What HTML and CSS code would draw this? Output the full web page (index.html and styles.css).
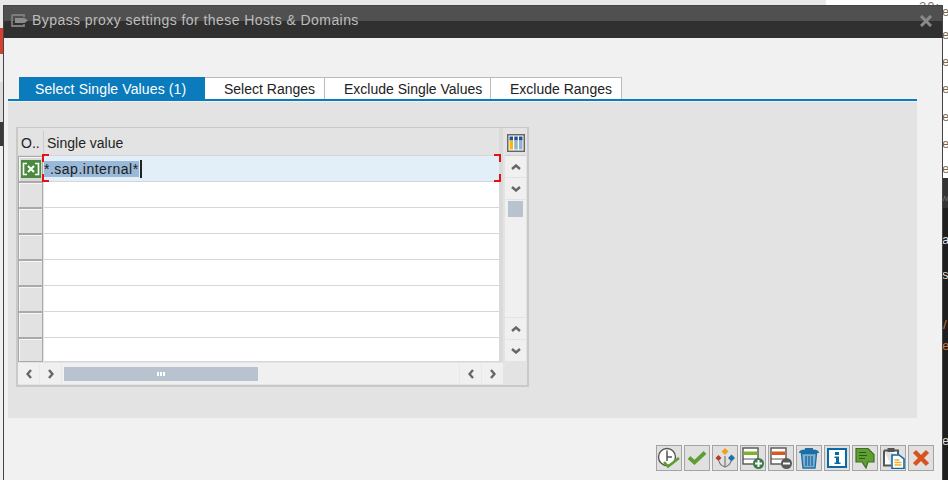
FILE: index.html
```html
<!DOCTYPE html>
<html lang="en">
<head>
<meta charset="utf-8">
<title>Bypass proxy settings</title>
<link rel="stylesheet" href="styles.css">
</head>
<body>
<div class="desktop">
  <div class="back-top"></div>
  <div class="back-dark"></div>
  <div class="back-band"></div>
  <div class="back-left"></div>
  <div class="frag f1">20:</div><div class="frag f2">e</div><div class="frag f3">e</div><div class="frag f4">e</div><div class="frag f5">e</div><div class="frag f6">e</div><div class="frag f7">e</div><div class="frag f7b">e</div>
  <div class="frag lt f8">W</div><div class="frag lt f9">a</div><div class="frag lt f10">s</div><div class="frag or f11">/</div><div class="frag or f12">e</div><div class="frag lt f13">e</div>

  <section class="dialog">
    <header class="titlebar">
      <svg class="title-icon" width="17" height="13" viewBox="0 0 17 13"><path d="M1 1h12v2M1 1v11h12v-2" fill="none" stroke="#7d7d7d" stroke-width="1.800"/><path d="M4 4h9.500L17 6.500 13.500 9H4z" fill="#8c8c8c"/></svg>
      <span class="title-text">Bypass proxy settings for these Hosts &amp; Domains</span>
      <svg class="close" width="12" height="12" viewBox="0 0 12 12"><path d="M1 1l10 10M11 1L1 11" stroke="#8a8a8a" stroke-width="3"/></svg>
    </header>
    <div class="content">
      <nav class="tabs">
        <span class="tab active">Select Single Values (1)</span>
        <span class="tab t2">Select Ranges</span>
        <span class="tab t3">Exclude Single Values</span>
        <span class="tab t4">Exclude Ranges</span>
      </nav>
      <div class="panel">
        <div class="table">
          <div class="grid">
            <div class="main">
              <div class="head">
                <span class="hc1">O..</span>
                <span class="hc2">Single value</span>
              </div>
              <div class="row selected">
                <span class="rowhead on">
                  <svg width="20" height="18" viewBox="0 0 20 18"><rect width="20" height="18" fill="#4a8a3e"/><path d="M6 3.500H2.500v11H6M14 3.500h3.500v11H14" fill="none" stroke="#fff" stroke-width="1.600"/><path d="M7 6l6 6M13 6l-6 6" stroke="#fff" stroke-width="2"/></svg>
                </span>
                <span class="cell"><span class="sel">*.sap.internal*</span><span class="caret"></span>
                  <i class="br tl"></i><i class="br bl"></i><i class="br tr"></i><i class="br brr"></i>
                </span>
              </div>
              <div class="row"><span class="rowhead"></span><span class="cell"></span></div>
              <div class="row"><span class="rowhead"></span><span class="cell"></span></div>
              <div class="row"><span class="rowhead"></span><span class="cell"></span></div>
              <div class="row"><span class="rowhead"></span><span class="cell"></span></div>
              <div class="row"><span class="rowhead"></span><span class="cell"></span></div>
              <div class="row"><span class="rowhead"></span><span class="cell"></span></div>
              <div class="row last"><span class="rowhead"></span><span class="cell"></span></div>
            </div>
            <div class="vbar">
              <div class="cfg">
                <svg width="18" height="18" viewBox="0 0 18 18"><rect x=".75" y=".75" width="16.500" height="16.500" fill="#fff" stroke="#666" stroke-width="1.500"/><rect x="2.500" y="2.500" width="3.500" height="4" fill="#27508f"/><rect x="2.500" y="6.500" width="3.500" height="9" fill="#f5b914"/><rect x="7.250" y="2.500" width="3.500" height="4" fill="#27508f"/><rect x="7.250" y="6.500" width="3.500" height="9" fill="#8fb4d2"/><rect x="12" y="2.500" width="3.500" height="4" fill="#27508f"/><rect x="12" y="6.500" width="3.500" height="9" fill="#8fb4d2"/></svg>
              </div>
              <button class="sb"><svg width="10" height="6" viewBox="0 0 10 6"><path d="M1 5l4-3.500L9 5" fill="none" stroke="#666" stroke-width="2.400"/></svg></button>
              <button class="sb"><svg width="10" height="6" viewBox="0 0 10 6"><path d="M1 1l4 3.500L9 1" fill="none" stroke="#666" stroke-width="2.400"/></svg></button>
              <div class="vtrack"><div class="vthumb"></div></div>
              <button class="sb"><svg width="10" height="6" viewBox="0 0 10 6"><path d="M1 5l4-3.500L9 5" fill="none" stroke="#666" stroke-width="2.400"/></svg></button>
              <button class="sb"><svg width="10" height="6" viewBox="0 0 10 6"><path d="M1 1l4 3.500L9 1" fill="none" stroke="#666" stroke-width="2.400"/></svg></button>
            </div>
          </div>
          <div class="hbar">
            <button class="hb"><svg width="6" height="10" viewBox="0 0 6 10"><path d="M5 1L1.500 5 5 9" fill="none" stroke="#666" stroke-width="2.400"/></svg></button>
            <button class="hb"><svg width="6" height="10" viewBox="0 0 6 10"><path d="M1 1l3.500 4L1 9" fill="none" stroke="#666" stroke-width="2.400"/></svg></button>
            <div class="htrack"><div class="hthumb"><i></i><i></i><i></i></div></div>
            <button class="hb"><svg width="6" height="10" viewBox="0 0 6 10"><path d="M5 1L1.500 5 5 9" fill="none" stroke="#666" stroke-width="2.400"/></svg></button>
            <button class="hb"><svg width="6" height="10" viewBox="0 0 6 10"><path d="M1 1l3.500 4L1 9" fill="none" stroke="#666" stroke-width="2.400"/></svg></button>
          </div>
        </div>
      </div>
      <footer class="actions">
        <button class="act"><svg width="24" height="23" viewBox="0 0 24 23"><circle cx="10" cy="10" r="8.500" fill="#fff" stroke="#555" stroke-width="1.400"/><path d="M10 3.500V10h5M10 10v4" fill="none" stroke="#555" stroke-width="1.500"/><path d="M7 15l4 4.500L22 11" fill="none" stroke="#5e9e2e" stroke-width="2.600"/></svg></button>
        <button class="act"><svg width="22" height="22" viewBox="0 0 22 22"><path d="M3 10.500l5.500 5L19 5.500" fill="none" stroke="#5f9e32" stroke-width="3.800"/></svg></button>
        <button class="act"><svg width="22" height="22" viewBox="0 0 22 22"><path d="M11 9v11M5 14c.5 3 3 5 6 6 3-1 5.500-3 6-6" fill="none" stroke="#777" stroke-width="1.200"/><path d="M11 1l3.500 3.500L11 8 7.500 4.500z" fill="#f0a020"/><path d="M4.500 8l3 3-3 3-3-3z" fill="#b5392b"/><path d="M17.500 7.500l3.500 3.500-3.500 3.500-3.500-3.500z" fill="#1f6fa8"/></svg></button>
        <button class="act"><svg width="24" height="24" viewBox="0 0 24 24"><rect x="2" y="2" width="15" height="16" fill="#fff" stroke="#555" stroke-width="1.400"/><rect x="2.800" y="5.500" width="13.500" height="3.500" fill="#7cb32b"/><path d="M2 13h15" stroke="#555"/><circle cx="17.500" cy="17.500" r="5.500" fill="#3a7a4a"/><path d="M17.500 14v7M14 17.500h7" stroke="#fff" stroke-width="2"/></svg></button>
        <button class="act"><svg width="24" height="24" viewBox="0 0 24 24"><rect x="2" y="2" width="15" height="16" fill="#fff" stroke="#555" stroke-width="1.400"/><rect x="2.800" y="5.500" width="13.500" height="3.500" fill="#d9581c"/><path d="M2 13h15" stroke="#555"/><circle cx="17.500" cy="17.500" r="5.500" fill="#5a5a5a"/><path d="M14 17.500h7" stroke="#fff" stroke-width="2"/></svg></button>
        <button class="act"><svg width="22" height="22" viewBox="0 0 22 22"><path d="M1 6c0-3 4-3.500 6-3.500V1h8v1.500c2 0 6 .5 6 3.500z" fill="#1d6ea5"/><path d="M3.500 6.500h15l-1.500 14.500H5z" fill="#7fb0d2" stroke="#1d6ea5" stroke-width="1.400"/><path d="M8 9v10M11 9v10M14 9v10" stroke="#1d6ea5" stroke-width="1.500"/></svg></button>
        <button class="act"><svg width="20" height="20" viewBox="0 0 20 20"><rect x="1" y="1" width="18" height="18" fill="#fff" stroke="#0a6aa8" stroke-width="2"/><path d="M8 4h4v3H8zM7.500 8.500H12v6h1.500V16h-6v-1.500H9V10H7.500z" fill="#0a6aa8"/></svg></button>
        <button class="act"><svg width="22" height="22" viewBox="0 0 22 22"><path d="M2 1.500h12l6 6V15h-6l-2 6-4-6H2z" fill="#5f9e32" stroke="#3f6e22" stroke-width="1.200"/><path d="M5 5.500h7M5 8.500h8M5 11.500h6" stroke="#2f5a1c" stroke-width="1.100"/></svg></button>
        <button class="act"><svg width="23" height="22" viewBox="0 0 23 22"><path d="M2 3.500h14v4M2 3.500v15h7" fill="#fff" stroke="#555" stroke-width="2"/><rect x="5.500" y="1" width="7" height="4" fill="#555"/><path d="M10 8h7l5 4v9.500H10z" fill="#fff" stroke="#0a6aa8" stroke-width="1.600"/><path d="M12.500 13h5M12.500 15.500h7M12.500 18h7" stroke="#f0b020" stroke-width="1.400"/></svg></button>
        <button class="act"><svg width="20" height="20" viewBox="0 0 20 20"><path d="M3.500 3.500l13 13M16.500 3.500l-13 13" stroke="#d9531e" stroke-width="4.400"/></svg></button>
      </footer>
    </div>
  </section>
</div>
</body>
</html>
```
FILE: styles.css
```css
* { box-sizing: border-box; }
html, body { margin: 0; padding: 0; }
body { width: 948px; height: 480px; overflow: hidden; font-family: "Liberation Sans", Arial, sans-serif; font-size: 14px; color: #222; }
.desktop { position: relative; width: 948px; height: 480px; background: #fff; overflow: hidden; }
.back-top { position: absolute; left: 0; top: 0; width: 826px; height: 6px; background: #e8e8e8; }
.back-dark { position: absolute; left: 942px; top: 178px; width: 6px; height: 302px; background: #1e1e1e; }
.back-band { position: absolute; left: 942px; top: 178px; width: 6px; height: 30px; background: #333; }
.back-left { position: absolute; left: 0; top: 6px; width: 4px; height: 474px; background: linear-gradient(#e8e8e8 0 22px, #d64030 22px 48px, #ececec 48px 76px, #dcdcdc 76px 116px, #3a3a3a 116px 140px, #f0f0f0 140px 300px, #f1f1f1 300px); }
.frag { position: absolute; font-size: 13px; line-height: 14px; color: #7a6650; }
.lt { color: #ddd; }
.or { color: #d0703a; }
.f1 { left: 919px; top: 0; color: #777; letter-spacing: 1px; }
.f2 { left: 942px; top: 5px; }
.f3 { left: 942px; top: 28px; }
.f4 { left: 942px; top: 55px; }
.f5 { left: 942px; top: 82px; }
.f6 { left: 942px; top: 110px; }
.f7 { left: 942px; top: 137px; }
.f7b { left: 942px; top: 162px; }
.f8 { left: 941px; top: 192px; color: #777; font-size: 8px; }
.f9 { left: 942px; top: 233px; }
.f10 { left: 942px; top: 268px; }
.f11 { left: 943px; top: 318px; }
.f12 { left: 942px; top: 339px; }
.f13 { left: 942px; top: 434px; }

.dialog { position: absolute; left: 3px; top: 5px; width: 940px; height: 480px; border: 1px solid #444; border-bottom: 0; background: #f1f1f1; display: flex; flex-direction: column; }
.titlebar { height: 32px; background: linear-gradient(#505050 0 15px, #303030 15px); display: flex; align-items: center; padding: 0 10px 0 7px; flex: none; }
.title-icon { flex: none; margin-right: 4px; margin-top: -3px; }
.title-text { flex: 1; color: #bdbdbd; font-size: 14px; letter-spacing: .43px; line-height: 29px; align-self: flex-start; }
.close { flex: none; margin-top: -2px; }

.content { flex: 1; display: flex; flex-direction: column; padding: 39px 25px 0 4px; }
.tabs { display: flex; padding-left: 11px; height: 24px; border-bottom: 2px solid #0a7bbd; flex: none; }
.tab { height: 22px; line-height: 23px; font-size: 14px; color: #222; background: #fff; border: 1px solid #bbb; border-left: 0; border-bottom: 0; padding-left: 19px; white-space: nowrap; }
.tab.active { width: 186px; background: #0a7bbd; color: #fff; border: 0; padding-left: 16px; line-height: 25px; letter-spacing: .12px; }
.t2 { width: 120px; }
.t3 { width: 166px; }
.t4 { width: 131px; }

.panel { height: 316px; margin-top: 1px; background: #e3e3e3; padding: 25px 0 0 8px; flex: none; }
.table { width: 513px; height: 260px; border: 2px solid #c9c9c9; border-top-width: 1px; display: flex; flex-direction: column; background: #e3e3e3; }
.grid { display: flex; height: 234px; flex: none; }
.main { width: 481px; flex: none; display: flex; flex-direction: column; }
.head { height: 28px; display: flex; align-items: center; flex: none; border-bottom: 1px solid #d6d6d6; padding-top: 2px; }
.hc1 { width: 25px; padding-left: 3px; }
.hc2 { flex: 1; padding-left: 3px; border-left: 1px solid #ccc; line-height: 24px; }
.row { height: 26px; display: flex; flex: none; }
.row.last { height: 24px; }
.rowhead { width: 25px; flex: none; background: #e2e2e2; border: 1px solid #aaa; box-shadow: inset 1px 1px #f6f6f6; display: flex; align-items: center; justify-content: center; }
.rowhead.on { background: #d8d8d8; }
.cell { flex: 1; position: relative; background: #fff; border-bottom: 1px solid #d6d6d6; margin-left: 1px; display: flex; align-items: center; }
.selected .cell { background: #e2eff8; }
.sel { background: #9ab8d8; color: #1c1c1c; height: 16px; line-height: 16px; font-size: 14px; letter-spacing: .5px; margin-top: 1px; }
.caret { width: 2px; height: 18px; background: #222; margin-left: 1px; }
.br { position: absolute; width: 7px; height: 8px; border: 0 solid #e01414; }
.tl { left: -2px; top: -2px; border-top-width: 2px; border-left-width: 2px; }
.bl { left: -2px; bottom: -1px; border-bottom-width: 2px; border-left-width: 2px; }
.tr { right: -2px; top: -2px; border-top-width: 2px; border-right-width: 2px; }
.brr { right: -2px; bottom: -1px; border-bottom-width: 2px; border-right-width: 2px; }

.vbar { width: 27px; flex: none; display: flex; flex-direction: column; border-left: 4px solid #dadada; padding-left: 2px; background: #e3e3e3; }
.cfg { height: 28px; display: flex; align-items: center; justify-content: center; flex: none; padding-top: 3px; border-bottom: 1px solid #d0d0d0; }
.sb { height: 21px; width: 21px; border: 0; padding: 0; margin: 0 0 1px; background: #f0f0f0; display: flex; align-items: center; justify-content: center; flex: none; }
.vtrack { flex: 1; background: #f0f0f0; width: 21px; padding: 1px 3px 0; margin-bottom: 1px; }
.vthumb { height: 16px; width: 15px; background: #b8c3cf; }

.hbar { height: 21px; display: flex; gap: 1px; background: #e8e8e8; margin-top: 1px; width: 485px; flex: none; }
.hb { width: 21px; height: 21px; border: 0; padding: 0; background: #f0f0f0; display: flex; align-items: center; justify-content: center; flex: none; }
.htrack { flex: 1; padding: 4px 0 0 2px; height: 21px; background: #f0f0f0; }
.hthumb { width: 194px; height: 14px; background: #b8c3cf; display: flex; align-items: center; justify-content: center; gap: 1px; }
.hthumb i { width: 2px; height: 4px; background: #fff; }

.actions { display: flex; justify-content: flex-end; gap: 2px; padding-top: 27px; margin-right: -17px; }
.act { width: 26px; height: 26px; padding: 0; border: 1px solid #a4a4a4; background: #e0e0e0; display: flex; align-items: center; justify-content: center; flex: none; }
.act svg { flex: none; }
```
